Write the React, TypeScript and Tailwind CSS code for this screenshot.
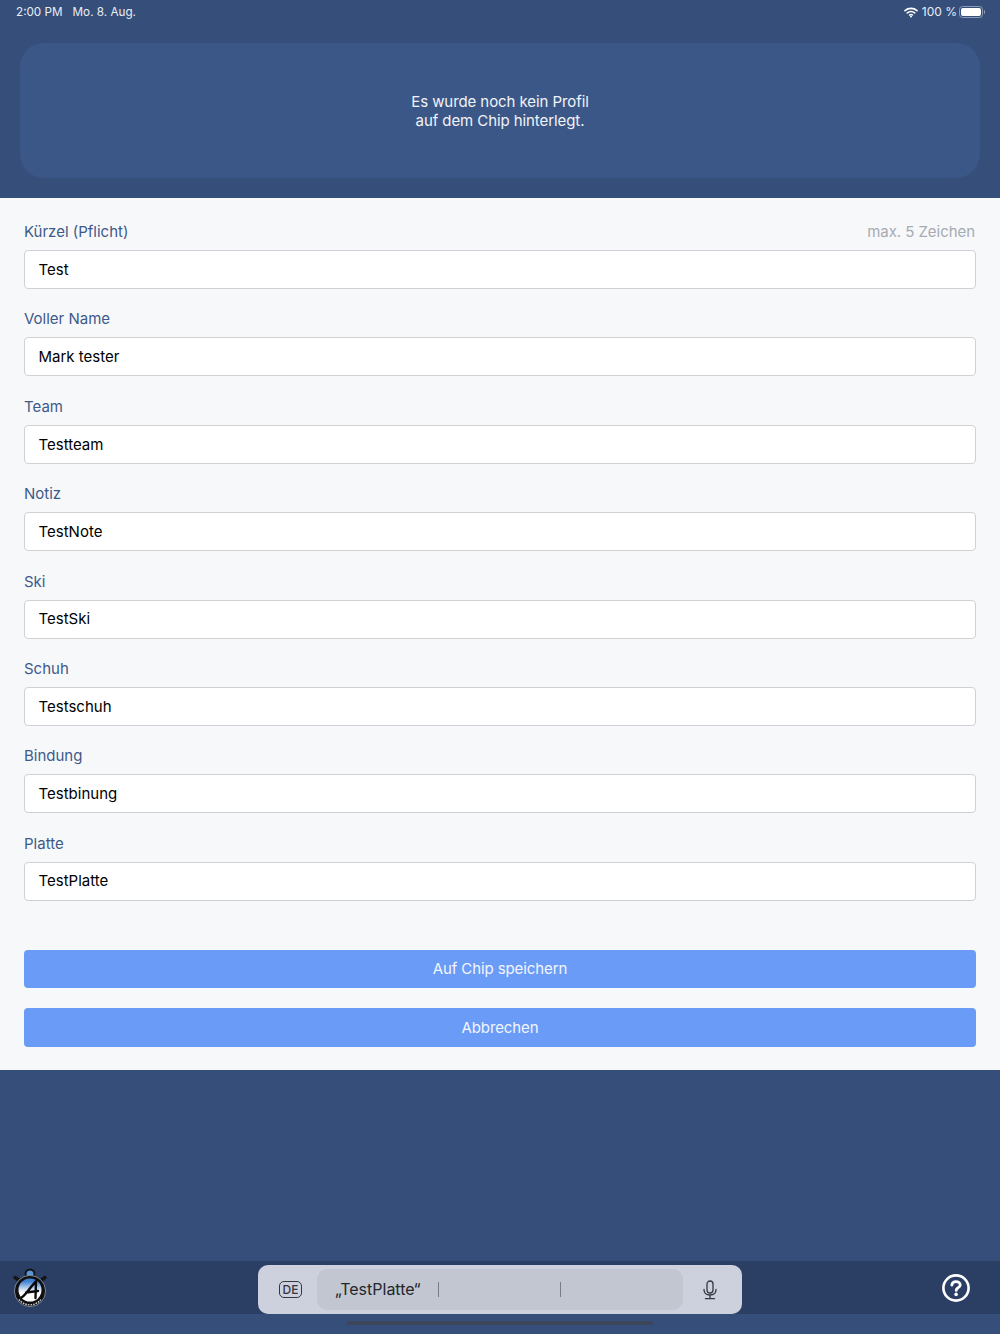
const FIELDS = [
  { label: "Kürzel (Pflicht)", value: "Test", hint: "max. 5 Zeichen" },
  { label: "Voller Name", value: "Mark tester" },
  { label: "Team", value: "Testteam" },
  { label: "Notiz", value: "TestNote" },
  { label: "Ski", value: "TestSki" },
  { label: "Schuh", value: "Testschuh" },
  { label: "Bindung", value: "Testbinung" },
  { label: "Platte", value: "TestPlatte" },
];

function StatusBar() {
  return (
    <div className="flex h-[24px] items-center justify-between pl-[16px] pr-[15px] text-[11.7px] leading-[24px] text-[#e9edf4]">
      <div className="flex gap-[10px]">
        <span>2:00 PM</span>
        <span>Mo. 8. Aug.</span>
      </div>
      <div className="flex items-center gap-[4px]">
        <svg width="14" height="11" viewBox="0 0 14 11" fill="none" stroke="#ffffff" strokeLinecap="round">
          <path d="M1 3.6C4.4 .6 9.6 .6 13 3.6" strokeWidth="1.7" />
          <path d="M3.3 5.9C5.4 4.1 8.6 4.1 10.7 5.9" strokeWidth="1.6" />
          <path d="M5.5 8C6.4 7.3 7.6 7.3 8.5 8" strokeWidth="1.5" />
          <circle cx="7" cy="9.6" r="1" fill="#ffffff" stroke="none" />
        </svg>
        <span className="-mr-[2px] text-[12px]">100 %</span>
        <div className="flex items-center">
          <div className="h-[12px] w-[24px] rounded-[3.5px] border border-[#8b9ab5] p-[1px]">
            <div className="h-full w-full rounded-[2px] bg-white" />
          </div>
          <div className="ml-[1px] h-[4px] w-[1px] rounded-r-sm bg-[#8b9ab5]" />
        </div>
      </div>
    </div>
  );
}

function Field({ label, value, hint }: { label: string; value: string; hint?: string }) {
  return (
    <div className="flex flex-col gap-[8px]">
      <div className="flex h-[21px] items-center justify-between pt-[1px] text-[15px] leading-[20px] text-[#3e5a8a]">
        <span>{label}</span>
        {hint && <span className="pr-[1px] tracking-[-0.05px] text-[#a6abb3]">{hint}</span>}
      </div>
      <div className="flex h-[39px] items-center rounded-[4px] border border-[#cfd1d4] bg-white pl-[13.5px] pt-[1px] text-[15px] text-black">
        {value}
      </div>
    </div>
  );
}

function LogoIcon() {
  return (
    <svg width="36" height="42" viewBox="0 0 36 42">
      <defs>
        <linearGradient id="face" x1="0" y1="0" x2="0" y2="1">
          <stop offset="0.12" stopColor="#3f7fd0" />
          <stop offset="0.45" stopColor="#c5d8ef" />
          <stop offset="0.6" stopColor="#ffffff" />
        </linearGradient>
      </defs>
      <circle cx="18" cy="7" r="4.5" fill="#5b95d8" stroke="#151515" strokeWidth="2" />
      <path d="M3 10.5L8 14M33 10.5L28 14" stroke="#151515" strokeWidth="3.5" strokeLinecap="round" />
      <circle cx="18" cy="24" r="15.6" fill="#111111" stroke="#7d8494" strokeWidth="1" />
      <circle cx="18" cy="23" r="11.5" fill="url(#face)" />
      <path d="M9.5 30.5C14 28 18 20 24 14.5L23.5 31M14 25.5L26 24" fill="none" stroke="#0b0b0b" strokeWidth="2.4" strokeLinecap="round" />
      <path d="M7 32.5A14 14 0 0 0 29 32.5" fill="none" stroke="#c9ccd2" strokeWidth="1.4" strokeDasharray="1.6 1" />
    </svg>
  );
}

function KeyboardBar() {
  return (
    <div className="absolute left-[258px] top-[1265px] flex h-[49px] w-[484px] items-center rounded-[10px] bg-[#cdd1de] px-[9px]">
      <div className="flex w-[47px] justify-center">
        <div className="flex h-[17px] w-[23px] items-center justify-center rounded-[5px] border-[1.5px] border-[#33383f] text-[12px] font-medium leading-none text-[#33383f]">
          DE
        </div>
      </div>
      <div className="ml-[3px] flex h-[41px] w-[366px] items-center rounded-[10px] bg-[#c1c6d1] text-[#24272c]">
        <div className="w-[121px] pb-[2px] pl-[18px] text-[16px]">„TestPlatte“</div>
        <div className="h-[15px] w-px bg-[#777c85]" />
        <div className="w-[121px]" />
        <div className="h-[15px] w-px bg-[#777c85]" />
      </div>
      <div className="flex flex-1 justify-center pl-[4px]">
        <svg width="16" height="20" viewBox="0 0 16 20" fill="none" stroke="#33383f" strokeWidth="1.3" strokeLinecap="round">
          <rect x="5" y="1" width="6" height="12" rx="3" />
          <path d="M2 9.5C2 13 4.5 15 8 15S14 13 14 9.5M8 15V18M3.5 18.7H12.5" />
        </svg>
      </div>
    </div>
  );
}

export default function App() {
  return (
    <div className="relative flex h-[1334px] w-[1000px] flex-col overflow-hidden bg-[#364f7a] font-['Inter',sans-serif]">
      <StatusBar />
      <div className="h-[174px] px-[20px] pt-[19px]">
        <div className="flex h-[135px] flex-col items-center justify-center rounded-[24px] bg-[#3b5788] pt-[2px] text-[15px] leading-[18.5px] tracking-[-0.08px] text-[#f1f3f7]">
          <p>Es wurde noch kein Profil</p>
          <p>auf dem Chip hinterlegt.</p>
        </div>
      </div>

      <div className="flex h-[872px] flex-col bg-[#f7f8fa] px-[24px] pt-[23px]">
        <div className="flex flex-col gap-[19.4px]">
          {FIELDS.map((f) => (
            <Field key={f.label} {...f} />
          ))}
        </div>
        <div className="mt-[49.2px] flex flex-col gap-[20px]">
          <button className="h-[38.5px] rounded-[4px] bg-[#6a9bf6] pt-[1px] text-[15px] tracking-[-0.1px] text-[#f3f6fd]">Auf Chip speichern</button>
          <button className="h-[38.5px] rounded-[4px] bg-[#6a9bf6] pt-[1px] text-[15px] tracking-[-0.1px] text-[#f3f6fd]">Abbrechen</button>
        </div>
      </div>

      <div className="mt-[191px] flex h-[53px] items-center justify-between bg-[#2b3f65] pl-[12px] pr-[29px]">
        <LogoIcon />
        <svg width="30" height="30" viewBox="0 0 30 30" fill="none" stroke="#ffffff" strokeLinecap="round">
          <circle cx="15" cy="15" r="12.6" strokeWidth="2.6" />
          <path d="M10.8 12C11.2 9.6 13 8.6 15 8.6C17.4 8.6 19.2 10 19.2 12C19.2 14.6 15.2 14.8 15.2 17.4" strokeWidth="2.8" />
          <circle cx="15.1" cy="21.4" r="1.8" fill="#ffffff" stroke="none" />
        </svg>
      </div>

      <KeyboardBar />

      <div className="mx-auto mt-[7px] h-[4px] w-[306px] rounded-full bg-[#3c4658]" />
    </div>
  );
}
